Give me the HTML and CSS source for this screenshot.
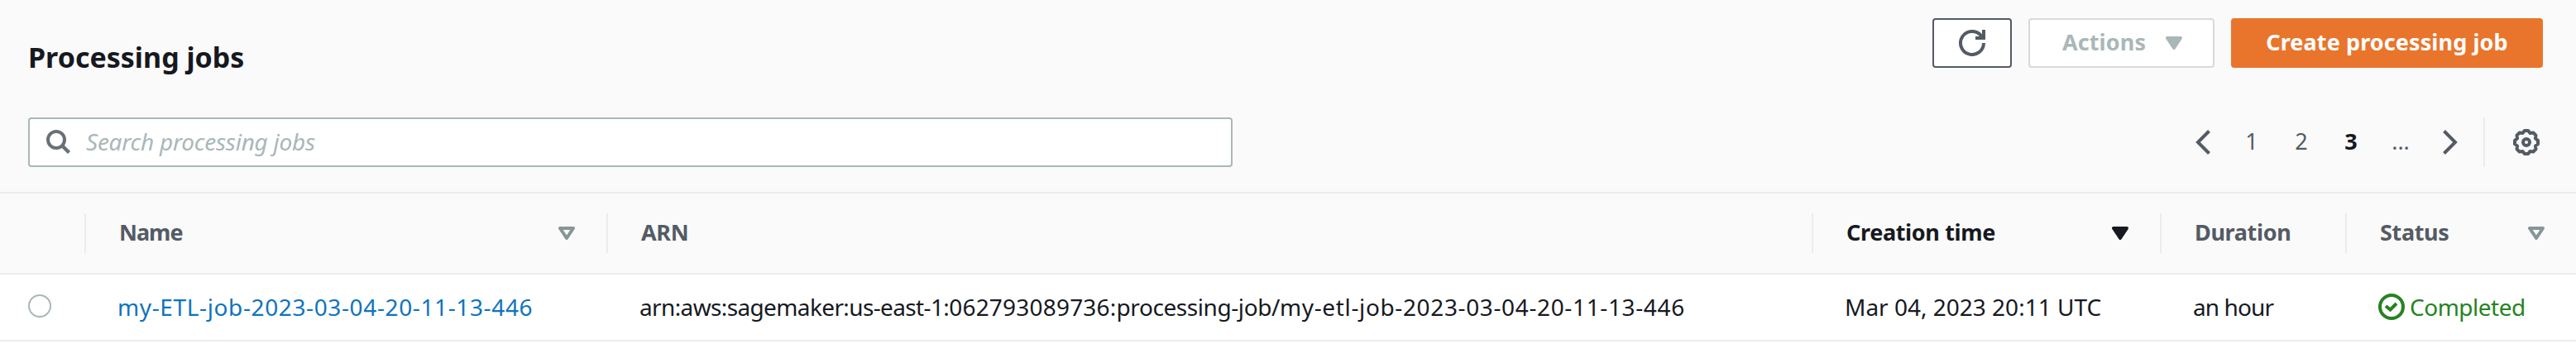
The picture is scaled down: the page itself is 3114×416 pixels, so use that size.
FILE: index.html
```
<!DOCTYPE html>
<html lang="en">
<head>
<meta charset="utf-8">
<title>Processing jobs</title>
<link rel="stylesheet" href="styles.css">
</head>
<body>
<main class="panel">
  <header class="top">
    <h1 class="title">Processing jobs</h1>
    <div class="actions">
      <button class="btn btn-refresh" aria-label="Refresh">
        <svg class="icon" width="32" height="32" viewBox="0 0 32 32"><path d="M30 16a14 14 0 1 1-3.6-9.4L28 8.500M30 0v10H20" fill="none" stroke="#545b64" stroke-width="4"/></svg>
      </button>
      <button class="btn btn-actions">Actions
        <svg width="20" height="16" viewBox="0 0 20 16"><path d="M2 2h16l-8 12z" fill="#aab7b8" stroke="#aab7b8" stroke-width="4" stroke-linejoin="round"/></svg>
      </button>
      <button class="btn btn-create">Create processing job</button>
    </div>
  </header>
  <div class="tools">
    <div class="search">
      <svg width="30" height="30" viewBox="0 0 30 30" fill="none" stroke="#687078" stroke-width="4"><circle cx="12" cy="12" r="10"/><path d="M19 19l8.500 8.500" stroke-width="4.400"/></svg>
      <span class="placeholder">Search processing jobs</span>
    </div>
    <nav class="pager">
      <svg width="18" height="30" viewBox="0 0 18 30"><path d="M16.500 1.500L3 15l13.500 13.500" fill="none" stroke="#545b64" stroke-width="4"/></svg>
      <span class="page page-1">1</span>
      <span class="page">2</span>
      <span class="page current">3</span>
      <span class="page">...</span>
      <svg class="next" width="18" height="30" viewBox="0 0 18 30"><path d="M1.500 1.500L15 15L1.500 28.500" fill="none" stroke="#545b64" stroke-width="4"/></svg>
      <span class="divider"></span>
      <svg width="32" height="32" viewBox="-16 -16 32 32" fill="none" stroke="#545b64" stroke-width="4"><path d="M14-2.200V2.200L10.900 4.500 11.500 8.300 8.300 11.500 4.500 10.900 2.200 14H-2.200L-4.500 10.900-8.300 11.500-11.500 8.300-10.900 4.500-14 2.200V-2.200L-10.900-4.500-11.500-8.300-8.300-11.500-4.500-10.900-2.200-14H2.200L4.500-10.900 8.300-11.500 11.500-8.300 10.900-4.500z" stroke-linejoin="round"/><circle r="4"/></svg>
    </nav>
  </div>
  <section class="table">
    <div class="row head">
      <div class="th blank"></div>
      <div class="th"><span class="h-name">Name</span>
        <svg class="sort" width="20" height="16" viewBox="0 0 20 16"><path d="M2 2h16l-8 12z" fill="#fafafa" stroke="#879596" stroke-width="4" stroke-linejoin="round"/></svg></div>
      <div class="th"><span>ARN</span></div>
      <div class="th sorted"><span>Creation time</span>
        <svg class="sort" width="20" height="16" viewBox="0 0 20 16"><path d="M2 2h16l-8 12z" fill="#16191f" stroke="#16191f" stroke-width="4" stroke-linejoin="round"/></svg></div>
      <div class="th"><span>Duration</span></div>
      <div class="th"><span>Status</span>
        <svg class="sort" width="20" height="16" viewBox="0 0 20 16"><path d="M2 2h16l-8 12z" fill="#fafafa" stroke="#879596" stroke-width="4" stroke-linejoin="round"/></svg></div>
    </div>
    <div class="row body">
      <div class="pick"><span class="radio"></span></div>
      <div class="td"><a class="link">my-ETL-job-2023-03-04-20-11-13-446</a></div>
      <div class="td"><span class="arn"><span class="arn-service">arn:aws:sagemaker:us-east-1:</span><span class="arn-account">062793089736:</span><span class="arn-type">processing-job/</span><span class="arn-name">my-etl-job-2023-03-04-20-11-13-446</span></span></div>
      <div class="td">Mar 04, 2023 20:11 UTC</div>
      <div class="td duration">an hour</div>
      <div class="td status">
        <svg width="32" height="32" viewBox="0 0 32 32" fill="none" stroke="#258321" stroke-width="4"><circle cx="16" cy="16" r="14"/><path d="M9 15l5.500 4.500 7.500-7.500"/></svg>
        <span>Completed</span></div>
    </div>
  </section>
</main>
</body>
</html>
```

FILE: styles.css
```
* { box-sizing: border-box; }
body {
  margin: 0;
  background: #fff;
  color: #16191f;
  font-family: "Noto Sans", "Open Sans", sans-serif;
}
svg { display: block; flex: none; }
.panel { width: 3114px; height: 416px; overflow: hidden; white-space: nowrap; background: #fff; }
.top {
  display: flex;
  justify-content: space-between;
  align-items: flex-start;
  height: 142px;
  padding: 22px 40px 0 34px;
  background: #fafafa;
}
.title { margin: 22px 0 0; font-size: 34px; line-height: 50px; font-weight: 700; }
.actions { display: flex; gap: 20px; }
.btn {
  display: flex;
  align-items: center;
  justify-content: center;
  height: 60px;
  padding: 0 0 3px;
  border: 2px solid #545b64;
  border-radius: 4px;
  background: #fff;
  font: 700 27px "Noto Sans", "Open Sans", sans-serif;
  letter-spacing: .1px;
}
.btn-refresh { width: 96px; padding: 0; }
.btn-actions { width: 225px; padding-left: 2px; gap: 24px; border-color: #d5dbdb; color: #aab7b8; }
.btn-actions svg { margin-top: 3px; }
.btn-create { width: 377px; border-color: #e9752c; background: #e9752c; color: #fff; }
.tools {
  display: flex;
  justify-content: space-between;
  height: 90px;
  padding: 0 44px 0 34px;
  background: #fafafa;
}
.search {
  display: flex;
  align-items: center;
  gap: 18px;
  width: 1456px;
  height: 60px;
  padding-left: 20px;
  border: 2px solid #aab7b8;
  border-radius: 4px;
  background: #fff;
}
.placeholder { padding-bottom: 2px; color: #aab7b8; font-size: 28px; font-style: italic; letter-spacing: -.25px; }
.pager { display: flex; align-items: center; height: 60px; color: #545b64; font-size: 27px; }
.page { width: 60px; padding-bottom: 3px; text-align: center; }
.page-1 { margin-left: 20px; }
.current { color: #16191f; font-weight: 700; }
.next { margin-left: 21px; }
.divider { width: 2px; height: 60px; margin: 0 34px 0 31px; background: #eaeded; }
.row { display: grid; grid-template-columns: 102px 631px 1457px 421px 224px 279px; }
.head {
  height: 100px;
  align-items: center;
  border-top: 2px solid #eaeded;
  border-bottom: 2px solid #eaeded;
  background: #fafafa;
}
.th {
  display: flex;
  align-items: center;
  justify-content: space-between;
  height: 48px;
  padding-left: 40px;
  border-left: 2px solid #eaeded;
  color: #545b64;
  font-size: 27px;
  font-weight: 700;
  letter-spacing: -.35px;
}
.th span { padding-bottom: 3px; }
.blank { border-left: 0; }
.sorted { color: #16191f; }
.h-name { letter-spacing: -1px; }
.sort { margin-right: 38px; }
.body { height: 81px; align-items: center; border-bottom: 2px solid #eaeded; font-size: 28px; }
.pick { padding: 0 0 3px 34px; }
.radio { display: block; width: 28px; height: 28px; border: 2px solid #aab7b8; border-radius: 50%; background: #fff; }
.td { padding: 0 0 1px 40px; }
.link { color: #0f74bd; letter-spacing: .62px; }
.arn-service { letter-spacing: -.63px; }
.arn-account { letter-spacing: .2px; }
.arn-type { letter-spacing: -.42px; }
.arn-name { letter-spacing: .63px; }
.duration { letter-spacing: -.9px; }
.status { display: flex; align-items: center; gap: 6px; color: #258321; letter-spacing: -.5px; }
```
